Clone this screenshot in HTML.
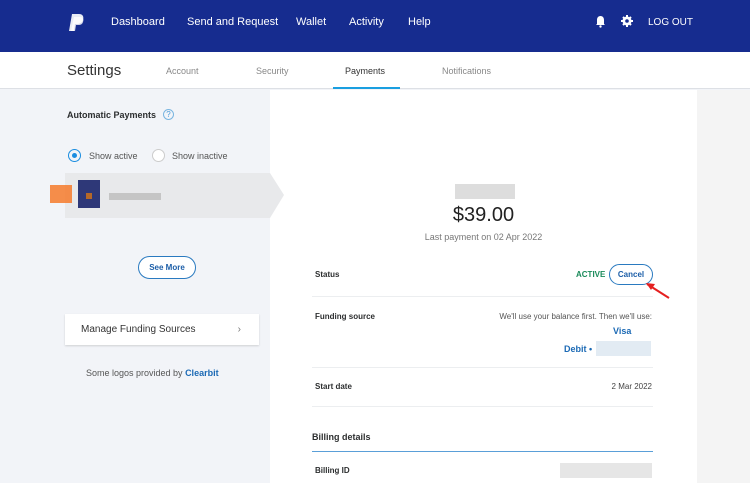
<!DOCTYPE html>
<html><head><meta charset="utf-8"><style>
*{margin:0;padding:0;box-sizing:border-box}
body{width:750px;height:483px;overflow:hidden;background:#f2f4f8;font-family:"Liberation Sans",sans-serif;position:relative;font-size:9px;color:#2c2e2f}
.a{position:absolute}
.hdr{left:0;top:0;width:750px;height:52px;background:#162c8f}
.nav{color:#fff;font-size:11px;top:16px}
.sub{left:0;top:52px;width:750px;height:37px;background:#fff;border-bottom:1px solid #dde0e5}
.tab{top:66px;font-size:9px;color:#888}
.b{font-weight:bold}
.row{left:312px;width:341px;border-top:1px solid #eceef0}
</style></head><body>
<div class="a hdr"></div>
<svg class="a" style="left:68px;top:13px" width="18" height="20" viewBox="0 0 18 20"><path d="M4 1h7c4 0 5 3 4 6-1 3-3 4-6 4H7l-1 7H1z" fill="#e8ecf5"/><path d="M6 4h6c3 0 4 2 3 5-1 3-3 3-6 3H8l-1 6H3z" fill="#fff" opacity=".8"/></svg>
<div class="a nav" style="left:111px">Dashboard</div>
<div class="a nav" style="left:187px">Send and Request</div>
<div class="a nav" style="left:296px">Wallet</div>
<div class="a nav" style="left:349px">Activity</div>
<div class="a nav" style="left:408px">Help</div>
<svg class="a" style="left:595px;top:15px" width="11" height="13" viewBox="0 0 11 13"><path d="M5.5 1c2.5 0 3.5 2 3.5 4v4l1 1H1l1-1V5c0-2 1-4 3.5-4z" fill="#fff"/><circle cx="5.5" cy="11.5" r="1.2" fill="#fff"/></svg>
<svg class="a" style="left:621px;top:15px" width="12" height="12" viewBox="0 0 12 12"><circle cx="6" cy="6" r="4.5" fill="#fff"/><path d="M6 0v12M0 6h12M2 2l8 8M10 2l-8 8" stroke="#fff" stroke-width="2"/><circle cx="6" cy="6" r="1.8" fill="#162c8f"/></svg>
<div class="a nav" style="left:648px;top:17px;font-size:10px">LOG OUT</div>
<div class="a sub"></div>
<div class="a" style="left:67px;top:62px;font-size:15px;color:#333">Settings</div>
<div class="a tab" style="left:166px">Account</div>
<div class="a tab" style="left:256px">Security</div>
<div class="a tab" style="left:345px;color:#333">Payments</div>
<div class="a tab" style="left:442px">Notifications</div>
<div class="a" style="left:333px;top:87px;width:67px;height:2px;background:#1a9fe0"></div>
<div class="a" style="left:270px;top:90px;width:427px;height:393px;background:#fff"></div>
<div class="a" style="left:697px;top:90px;width:53px;height:393px;background:#f4f4f4"></div>
<div class="a b" style="left:67px;top:110px">Automatic Payments</div>
<div class="a" style="left:163px;top:109px;width:11px;height:11px;border:1px solid #7ab5e0;border-radius:50%;color:#4a9ad8;font-size:8px;text-align:center;line-height:9px">?</div>
<div class="a" style="left:68px;top:149px;width:13px;height:13px;border:1px solid #1a8de0;border-radius:50%"><div style="margin:3px;width:5px;height:5px;border-radius:50%;background:#1a8de0"></div></div>
<div class="a" style="left:89px;top:151px;color:#555">Show active</div>
<div class="a" style="left:152px;top:149px;width:13px;height:13px;border:1px solid #ccc;border-radius:50%;background:#fff"></div>
<div class="a" style="left:172px;top:151px;color:#555">Show inactive</div>
<div class="a" style="left:65px;top:173px;width:205px;height:45px;background:#e8e9eb"></div>
<div class="a" style="left:270px;top:173px;width:0;height:0;border-top:22px solid transparent;border-bottom:23px solid transparent;border-left:14px solid #e8e9eb"></div>
<div class="a" style="left:50px;top:185px;width:22px;height:18px;background:#f67a2c;opacity:.85"></div>
<div class="a" style="left:78px;top:180px;width:22px;height:28px;background:#2e3878"></div>
<div class="a" style="left:86px;top:193px;width:6px;height:6px;background:#b56828"></div>
<div class="a" style="left:109px;top:193px;width:52px;height:7px;background:#c5c5c5"></div>
<div class="a b" style="left:138px;top:256px;width:58px;height:23px;border:1px solid #2a7ac0;border-radius:12px;color:#1c5ea8;text-align:center;line-height:21px;font-size:8px;background:#fff">See More</div>
<div class="a" style="left:65px;top:314px;width:194px;height:31px;background:#fff;box-shadow:0 1px 2px rgba(0,0,0,.15);font-size:10px;line-height:31px;padding-left:16px;color:#333">Manage Funding Sources<span style="position:absolute;right:18px;color:#777">›</span></div>
<div class="a" style="left:86px;top:368px;color:#555">Some logos provided by <b style="color:#1c6ab5">Clearbit</b></div>
<div class="a" style="left:455px;top:184px;width:60px;height:15px;background:#ddd"></div>
<div class="a" style="left:270px;top:204px;width:427px;text-align:center;font-size:20px;color:#222">$39.00</div>
<div class="a" style="left:270px;top:232px;width:427px;text-align:center;color:#777">Last payment on 02 Apr 2022</div>
<div class="a b" style="left:315px;top:270px;font-size:8px">Status</div>
<div class="a b" style="left:576px;top:270px;font-size:8px;color:#1a8a5a">ACTIVE</div>
<div class="a b" style="left:609px;top:264px;width:44px;height:21px;border:1px solid #2a7ac0;border-radius:11px;color:#1c5ea8;font-size:8px;text-align:center;line-height:19px">Cancel</div>
<svg class="a" style="left:645px;top:282px" width="25" height="17"><path d="M2 2l22 14" stroke="#e52020" stroke-width="2"/><path d="M1 1l9 1-4 6z" fill="#e52020"/></svg>
<div class="a row" style="top:296px"></div>
<div class="a b" style="left:315px;top:312px;font-size:8px">Funding source</div>
<div class="a" style="left:460px;top:312px;width:192px;text-align:right;font-size:8px;color:#555">We'll use your balance first. Then we'll use:</div>
<div class="a b" style="left:613px;top:326px;color:#1c6ab5">Visa</div>
<div class="a b" style="left:564px;top:344px;color:#1c6ab5">Debit •</div>
<div class="a" style="left:596px;top:341px;width:55px;height:15px;background:#e2ebf3"></div>
<div class="a row" style="top:367px"></div>
<div class="a b" style="left:315px;top:382px;font-size:8px">Start date</div>
<div class="a" style="left:560px;top:382px;width:92px;text-align:right;font-size:8px;color:#444">2 Mar 2022</div>
<div class="a row" style="top:406px"></div>
<div class="a b" style="left:312px;top:432px;font-size:9px">Billing details</div>
<div class="a" style="left:312px;top:451px;width:341px;height:1px;background:#5a9fd8"></div>
<div class="a b" style="left:315px;top:466px;font-size:8px">Billing ID</div>
<div class="a" style="left:560px;top:463px;width:92px;height:15px;background:#e6e6e6"></div>
</body></html>
